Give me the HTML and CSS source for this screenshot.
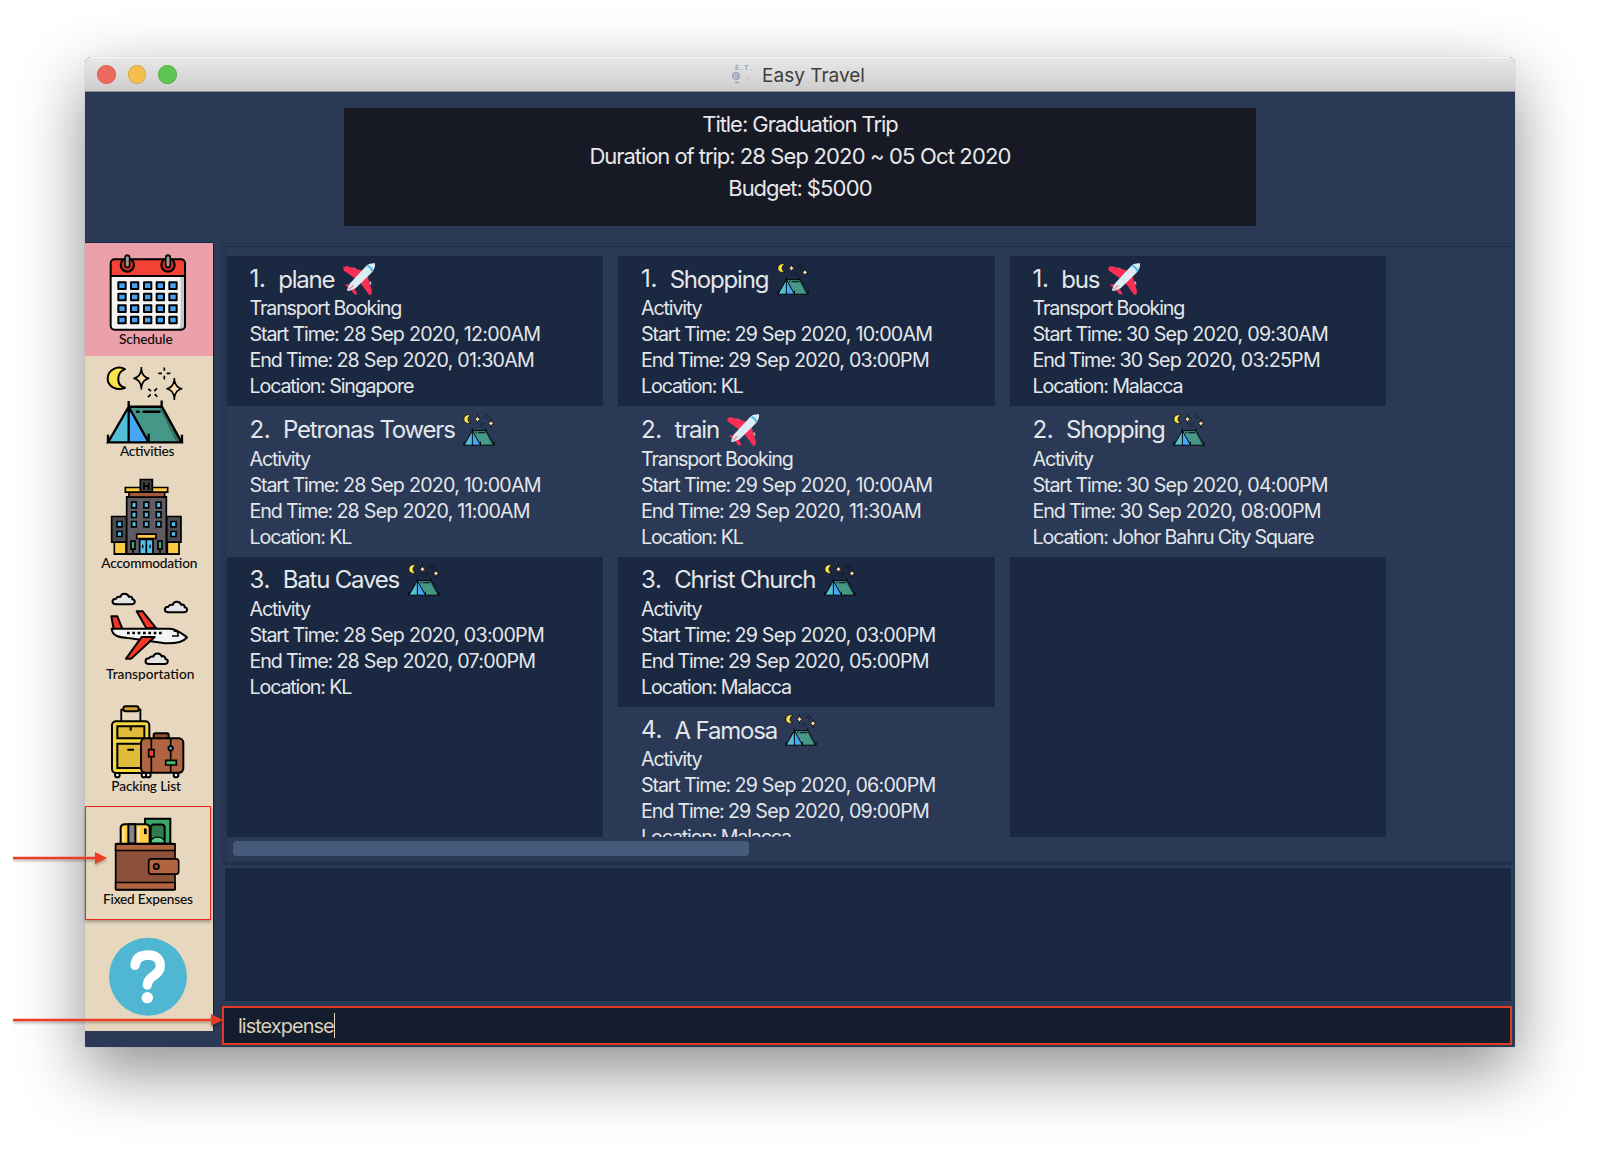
FILE: index.html
```html
<!DOCTYPE html>
<html lang="en">
<head>
<meta charset="utf-8">
<title>Easy Travel</title>
<link rel="stylesheet" href="styles.css">
</head>
<body>
<svg class="defs" aria-hidden="true">
  <symbol id="tent" viewBox="78 376 234 236">
    <path d="M135 386C112 374 83 388 83 414S112 452 135 442C108 436 108 396 135 386Z" fill="#fbe34a" stroke="#000" stroke-width="6" stroke-linejoin="round"/>
    <path d="M184 388Q188 410 206 414Q188 418 184 440Q180 418 162 414Q180 410 184 388ZM283 420Q287 441 305 445Q287 449 283 471Q279 449 261 445Q279 441 283 420Z" fill="#fcdcae" stroke="#000" stroke-width="5" stroke-linejoin="round"/>
    <path d="M184 380v10M184 437v10M283 413v10M283 469v10M253 381v10M253 406v11M235 399h11M260 399h11M205 445l8 7M224 461l8 8M231 444l-8 8M212 462l-8 8" stroke="#000" stroke-width="5" fill="none"/>
    <path d="M146 499H246L305 606H206Z" fill="#459887"/>
    <path d="M246 499L305 606H290L236 499Z" fill="#35705f"/>
    <path d="M146 499L86 606H146Z" fill="#52bdd4"/>
    <path d="M146 499L206 606H146Z" fill="#48a7f5"/>
    <path d="M146 482V606M146 499H246L305 606H84L146 499L206 606M245 480V499M84 583V606M206 580V606M306 583V606" fill="none" stroke="#000" stroke-width="7"/>
    <path d="M191 514H238M171 514H176" stroke="#000" stroke-width="8" stroke-linecap="round"/>
  </symbol>
  <symbol id="plane" viewBox="0 0 96 96">
    <path d="M30 13l10 5-3 7-8-3zM83 54l3 10-7 2-4-7z" fill="#9fbccb"/>
    <path d="M0 14L10 9L62 24L42 50L3 23ZM72 34L87 84L85 95L78 95L50 56ZM5 66L14 63L34 76L44 94L34 94L20 76Z" fill="#fb2f55"/>
    <path d="M96 1C88 0 78 2 70 8L20 62L12 80Q14 86 20 83L38 76L87 28C93 20 98 8 96 1Z" fill="#dcecf4"/>
    <path d="M75 7Q86 10 90 21L86 26Q82 14 70 10Z" fill="#39b6e8"/>
    <path d="M15 79l14-13 5 2-15 14z" fill="#fb2f55" opacity=".45"/>
  </symbol>
</svg>
<div class="window">
  <header class="titlebar">
    <div class="lights"><i class="light red"></i><i class="light yellow"></i><i class="light green"></i></div>
    <div class="caption">
      <svg class="app-icon" viewBox="0 0 22 22"><text x="3" y="6" class="et">E.T.</text><circle cx="4" cy="12" r="3.2" fill="#c3c8d2" stroke="#959fb8" stroke-width="1.4"/><path d="M3 12h3M3 18.500h4" stroke="#9aa4bb" stroke-width="1.500"/><path d="M14 14l5 3" stroke="#e8c0c0" stroke-width="1.500"/></svg>
      <span>Easy Travel</span>
    </div>
  </header>
  <div class="trip">
    <div>Title: Graduation Trip</div>
    <div>Duration of trip: <span class="num">28 Sep 2020 ~ 05 Oct 2020</span></div>
    <div>Budget: <span class="num">$5000</span></div>
  </div>
  <div class="body">
    <nav class="sidebar">
      <svg class="tab active" viewBox="15 9 384 337.7">
        <rect x="92" y="58" width="223" height="211" rx="12" fill="#f5f5f5"/>
        <path d="M302 108h12v150q0 10-10 11h-14q12-4 12-16z" fill="#c3c7d4"/>
        <path d="M92 108V70q0-12 12-12H303q12 0 12 12v38z" fill="#f44336"/>
        <rect x="92" y="58" width="223" height="211" rx="12" fill="none" stroke="#000" stroke-width="6"/>
        <path d="M92 108H315" stroke="#000" stroke-width="6"/>
        <g fill="#c52a22" stroke="#000" stroke-width="6"><circle cx="142" cy="75" r="20"/><circle cx="264" cy="75" r="20"/></g>
        <path d="M142 52V76M264 52V76" stroke="#000" stroke-width="18" stroke-linecap="round"/>
        <path d="M142 53V75M264 53V75" stroke="#999" stroke-width="9" stroke-linecap="round"/>
        <g fill="#48a2f0" stroke="#000" stroke-width="6">
          <path id="wk" d="M115 127h22v20h-22zM153 127h22v20h-22zM192 127h22v20h-22zM230 127h22v20h-22zM268 127h22v20h-22z" stroke-linejoin="round"/>
          <use href="#wk" y="34"/><use href="#wk" y="69"/><use href="#wk" y="103"/>
        </g>
        <text x="117" y="311" textLength="161">Schedule</text>
      </svg>
      <svg class="tab" viewBox="15 346.7 384 337.7">
        <use href="#tent" x="78" y="376" width="234" height="236"/>
        <text x="120" y="648" textLength="163">Activities</text>
      </svg>
      <svg class="tab" viewBox="15 9.4 384 337.7">
        <g stroke="#000" stroke-width="5">
          <path d="M103 232h35v36h-35zM262 232h35v36h-35z" fill="#ffca43"/>
          <path d="M95 155h45v77H95zM260 155h43v77h-43z" fill="#4c4b50"/>
          <path d="M140 96h119v172H140z" fill="#5f5b63"/>
          <path d="M147 82h107v15H147z" fill="#a35b3b"/>
          <path d="M136 68h127v14H136z" fill="#ffca43"/>
          <path d="M181 44h36v37h-36z" fill="#3f3f44"/>
        </g>
        <path d="M192 53v22M206 53v22M192 64h14" stroke="#000" stroke-width="5"/>
        <g fill="#4fc0ef" stroke="#000" stroke-width="5">
          <path d="M155 112h14v17h-14zM192 112h14v17h-14zM229 112h14v17h-14zM155 141h14v17h-14zM192 141h14v17h-14zM229 141h14v17h-14zM155 170h14v16h-14zM192 170h14v16h-14zM229 170h14v16h-14zM111 170h15v16h-15zM273 170h15v16h-15zM111 200h15v15h-15zM273 200h15v15h-15z"/>
          <path d="M179 224h20v44h-20zM199 224h20v44h-20z"/>
        </g>
        <path d="M170 208h58v13h-58z" fill="#ffca43" stroke="#000" stroke-width="5"/>
        <path d="M188 240v10M210 240v10" stroke="#000" stroke-width="4"/>
        <path d="M153 229h12v24h-12zM234 229h12v24h-12z" fill="#4aa678" stroke="#000" stroke-width="5"/>
        <path d="M159 253v15M240 253v15M102 268H298" stroke="#000" stroke-width="5"/>
        <text x="64" y="308" textLength="288">Accommodation</text>
      </svg>
      <svg class="tab" viewBox="15 347.1 384 337.7">
        <g fill="#e4e4e4" stroke="#000" stroke-width="6" stroke-linejoin="round">
          <path id="cloud" d="M108 417C94 417 94 400 108 400Q112 393 121 395C124 382 143 382 147 395C151 391 158 396 157 402C167 402 167 417 155 417Z"/>
          <use href="#cloud" x="157" y="24"/><use href="#cloud" x="99" y="179"/>
        </g>
        <g stroke="#000" stroke-width="6" stroke-linejoin="round">
          <path d="M170 438H188L229 489H199Z" fill="#f53527"/>
          <path d="M101 491L94 453H112L127 491Z" fill="#f53527"/>
          <path d="M95 490H270C291 491 306 505 321 516C309 532 286 535 255 534L150 519C122 516 97 515 95 490Z" fill="#f4f4f5"/>
          <path d="M185 515H224L154 580H138Z" fill="#f53527"/>
        </g>
        <path d="M141 503H246" stroke="#000" stroke-width="8" stroke-dasharray="8 8"/>
        <path d="M276 512H294V500L281 496" stroke="#000" stroke-width="5" fill="none"/>
        <text x="78" y="640" textLength="265">Transportation</text>
      </svg>
      <svg class="tab" viewBox="15 9.9 384 337.7">
        <path d="M124 96V60H181V96" fill="none" stroke="#000" stroke-width="6"/>
        <path d="M129 96V65H176V96" fill="none" stroke="#d8d8d8" stroke-width="3"/>
        <rect x="130" y="50" width="46" height="15" rx="7" fill="#d2a233" stroke="#000" stroke-width="6"/>
        <g fill="#fff" stroke="#000" stroke-width="6"><circle cx="112" cy="256" r="7"/><circle cx="192" cy="256" r="7"/><circle cx="205" cy="256" r="7"/><circle cx="288" cy="256" r="7"/></g>
        <g stroke="#000" stroke-width="6">
          <rect x="96" y="95" width="112" height="155" rx="12" fill="#f6d73f"/>
          <path d="M112 110H193V146H112ZM112 162H193V235H112Z" fill="#e0bb3a"/>
          <path d="M152 110V123M142 180H162" fill="none"/>
          <rect x="221" y="131" width="45" height="20" rx="5" fill="#934b31"/>
          <rect x="183" y="146" width="127" height="103" rx="13" fill="#b06442"/>
          <path d="M214 146V249M272 146V249" stroke-width="5"/>
          <path d="M206 180h16v21h-16z" fill="#f44336" stroke-width="5"/>
          <path d="M257 212h32v14h-32z" fill="#4caf6e" stroke-width="5"/>
          <circle cx="272" cy="176" r="7" fill="#3c8be0" stroke-width="5"/>
        </g>
        <text x="94" y="304" textLength="209">Packing List</text>
      </svg>
      <svg class="tab" viewBox="15 347.6 384 337.7">
        <g stroke="#000" stroke-width="6">
          <path d="M195 386H271V462H195Z" fill="#3da768"/>
          <path d="M212 462V412Q213 403 222 403H246Q254 404 254 412V462Z" fill="#317b4c"/>
          <path d="M212 459Q213 441 233 441T254 459Z" fill="#5bcb8c" stroke-width="4"/>
          <path d="M122 462V413Q123 402 134 402H198Q209 403 209 414V462Z" fill="#ffd045"/>
          <path d="M145 402H166V460H145Z" fill="#83878d"/>
          <path d="M196 415V432" stroke-width="8"/>
        </g>
        <path d="M130 415v40M176 410v45" stroke="#f7ecd0" stroke-width="5"/>
        <g stroke="#000" stroke-width="5">
          <rect x="107" y="460" width="178" height="139" rx="4" fill="#8c4f37"/>
          <path d="M107 481V462H285V481ZM107 577H285V598H107Z" fill="#b1643f"/>
          <rect x="206" y="506" width="90" height="46" rx="8" fill="#b1643f"/>
          <circle cx="229" cy="529" r="8" fill="#8c4f37"/>
        </g>
        <text x="69" y="641" textLength="270">Fixed Expenses</text>
      </svg>
      <svg class="tab" viewBox="255 233 384 337.7">
        <circle cx="444" cy="409" r="117" fill="#50b7d3"/>
        <path d="M405 375C408 352 423 344 444 344C470 344 481 357 481 377C481 406 442 406 442 434" fill="none" stroke="#fff" stroke-width="28" stroke-linecap="round"/>
        <circle cx="442" cy="472" r="17" fill="#fff"/>
      </svg>
    </nav>
    <main class="main">
      <section class="schedule">
        <div class="days">
          <ul class="day">
            <li><h3>1.  <b>plane</b><svg><use href="#plane"/></svg></h3><p>Transport Booking</p><p>Start Time: <span>28 Sep 2020, 12:00AM</span></p><p>End Time: <span>28 Sep 2020, 01:30AM</span></p><p>Location: Singapore</p></li>
            <li><h3>2.  <b>Petronas Towers</b><svg><use href="#tent"/></svg></h3><p>Activity</p><p>Start Time: <span>28 Sep 2020, 10:00AM</span></p><p>End Time: <span>28 Sep 2020, 11:00AM</span></p><p>Location: KL</p></li>
            <li><h3>3.  <b>Batu Caves</b><svg><use href="#tent"/></svg></h3><p>Activity</p><p>Start Time: <span>28 Sep 2020, 03:00PM</span></p><p>End Time: <span>28 Sep 2020, 07:00PM</span></p><p>Location: KL</p></li>
          </ul>
          <ul class="day">
            <li><h3>1.  <b>Shopping</b><svg><use href="#tent"/></svg></h3><p>Activity</p><p>Start Time: <span>29 Sep 2020, 10:00AM</span></p><p>End Time: <span>29 Sep 2020, 03:00PM</span></p><p>Location: KL</p></li>
            <li><h3>2.  <b>train</b><svg><use href="#plane"/></svg></h3><p>Transport Booking</p><p>Start Time: <span>29 Sep 2020, 10:00AM</span></p><p>End Time: <span>29 Sep 2020, 11:30AM</span></p><p>Location: KL</p></li>
            <li><h3>3.  <b>Christ Church</b><svg><use href="#tent"/></svg></h3><p>Activity</p><p>Start Time: <span>29 Sep 2020, 03:00PM</span></p><p>End Time: <span>29 Sep 2020, 05:00PM</span></p><p>Location: Malacca</p></li>
            <li><h3>4.  <b>A Famosa</b><svg><use href="#tent"/></svg></h3><p>Activity</p><p>Start Time: <span>29 Sep 2020, 06:00PM</span></p><p>End Time: <span>29 Sep 2020, 09:00PM</span></p><p>Location: Malacca</p></li>
          </ul>
          <ul class="day">
            <li><h3>1.  <b>bus</b><svg><use href="#plane"/></svg></h3><p>Transport Booking</p><p>Start Time: <span>30 Sep 2020, 09:30AM</span></p><p>End Time: <span>30 Sep 2020, 03:25PM</span></p><p>Location: Malacca</p></li>
            <li><h3>2.  <b>Shopping</b><svg><use href="#tent"/></svg></h3><p>Activity</p><p>Start Time: <span>30 Sep 2020, 04:00PM</span></p><p>End Time: <span>30 Sep 2020, 08:00PM</span></p><p>Location: Johor Bahru City Square</p></li>
            <li></li>
          </ul>
        </div>
        <div class="scrollbar"><div class="thumb"></div></div>
      </section>
      <section class="result"></section>
      <div class="command"><span>listexpense</span><i class="caret"></i></div>
    </main>
  </div>
  <div class="highlight"></div>
</div>
<svg class="arrow arrow-tab" viewBox="0 0 94 14"><path d="M0 7H84" /><path class="head" d="M82 1L94 7L82 13Z"/></svg>
<svg class="arrow arrow-command" viewBox="0 0 210 14"><path d="M0 7H200" /><path class="head" d="M198 1L210 7L198 13Z"/></svg>
</body>
</html>
```
FILE: styles.css
```css
* { box-sizing: border-box; margin: 0; padding: 0; }
body { width: 1600px; height: 1159px; overflow: hidden; background: #fff; position: relative; padding: 57px 0 0 85px; font-family: Inter, "Liberation Sans", sans-serif; }
.defs { position: absolute; width: 0; height: 0; }
.window { position: relative; width: 1430px; height: 990px; display: flex; flex-direction: column; background: #293956; border-radius: 6px 6px 0 0; box-shadow: 0 24px 66px rgba(0,0,0,.45), 0 0 1px rgba(0,0,0,.3); }
.titlebar { height: 35px; flex: none; display: flex; align-items: center; border-radius: 6px 6px 0 0; background: linear-gradient(#e8e8e8, #cdcdcd); border-top: 1px solid #f8f8f8; border-bottom: 1px solid #8f9196; padding-left: 12px; }
.lights { display: flex; gap: 12px; width: 80px; }
.light { width: 18.5px; height: 18.5px; border-radius: 50%; border: 1px solid; }
.red { background: #ed6a5e; border-color: #dc5b50; }
.yellow { background: #f5bf4f; border-color: #dfa63f; }
.green { background: #61c554; border-color: #50ad43; }
.caption { flex: 1; padding: 1px 95px 0 0; display: flex; justify-content: center; align-items: center; gap: 8px; color: #3e3e3e; font-size: 19px; }
.app-icon { width: 22px; height: 22px; fill: none; }
.et { font: bold 7.5px "Liberation Mono", monospace; fill: #a0a6b3; }
.trip { width: 912px; height: 118px; flex: none; margin: 16px auto 17px; background: #171924; color: #e8e8ea; font-size: 22px; line-height: 32px; text-align: center; letter-spacing: -1.05px; }
.trip .num { letter-spacing: -.85px; }
.body { flex: 1; display: flex; min-height: 0; }
.sidebar { width: 128px; height: 788px; background: #e6d7be; display: flex; flex-direction: column; box-shadow: 1px 0 0 #101c3c, 0 -1px 0 #14284a; }
.tab { width: 128px; height: 112.57px; flex: none; display: block; }
.tab.active { background: #eb9fa9; }
.tab text { font: 500 41px Lato, sans-serif; fill: #0a0a0a; }
.main { flex: 1; display: flex; flex-direction: column; padding: 0 3px 2px 9px; min-width: 0; }
.schedule { height: 622px; flex: none; border: 1px solid #22304c; box-shadow: inset 2px 2px 0 #293956, inset 3px 3px 0 #22304c; border-bottom: 3px solid #22304c; padding: 12px 0 0 3.6px; margin-right: -2px; }
.days { display: flex; gap: 15px; height: 580.5px; overflow: hidden; }
.day { width: 376.5px; flex: none; list-style: none; display: flex; flex-direction: column; }
.day li { min-height: 150.4px; flex: none; padding: 7.2px 0 0 23px; color: #e4e6ea; }
.day li:nth-child(odd) { background: #1a2841; }
.day li:nth-child(3):last-child { flex: 1; }
h3 { height: 32px; line-height: 34px; display: flex; align-items: center; font-weight: 400; font-size: 24px; letter-spacing: -.4px; white-space: pre; }
h3 b { font-weight: 400; letter-spacing: -1.2px; padding-top: 1px; }
h3 svg { width: 32px; height: 32px; margin-left: 8.5px; }
p { font-size: 19.7px; line-height: 26px; letter-spacing: -1.17px; white-space: nowrap; }
p span { letter-spacing: -.77px; }
.scrollbar { padding: 4.5px 0 0 6px; }
.thumb { width: 516px; height: 15px; border-radius: 4px; background: #465a7b; }
.result { height: 135px; flex: none; margin: 2px 0 4px 2px; background: #1a2841; border: 1px solid #2b3c5c; }
.command { height: 39px; flex: none; border: 2px solid #e23a24; background: #141d2e; display: flex; align-items: center; padding-left: 14px; color: #dccfb8; font-size: 20px; letter-spacing: -1px; }
.caret { width: 1.5px; height: 25px; background: #e6d7be; }
.highlight { position: absolute; left: 0; top: 749px; width: 126px; height: 114px; border: 1.5px solid #e8281c; box-shadow: 0 2px 3px rgba(0,0,0,.3); }
.arrow { position: absolute; left: 13px; height: 14px; stroke: #ea3d24; stroke-width: 2.4px; filter: drop-shadow(0 2px 1px rgba(0,0,0,.25)); }
.arrow .head { fill: #ea3d24; stroke: none; }
.arrow-tab { top: 851px; width: 94px; }
.arrow-command { top: 1013px; width: 210px; }
```
